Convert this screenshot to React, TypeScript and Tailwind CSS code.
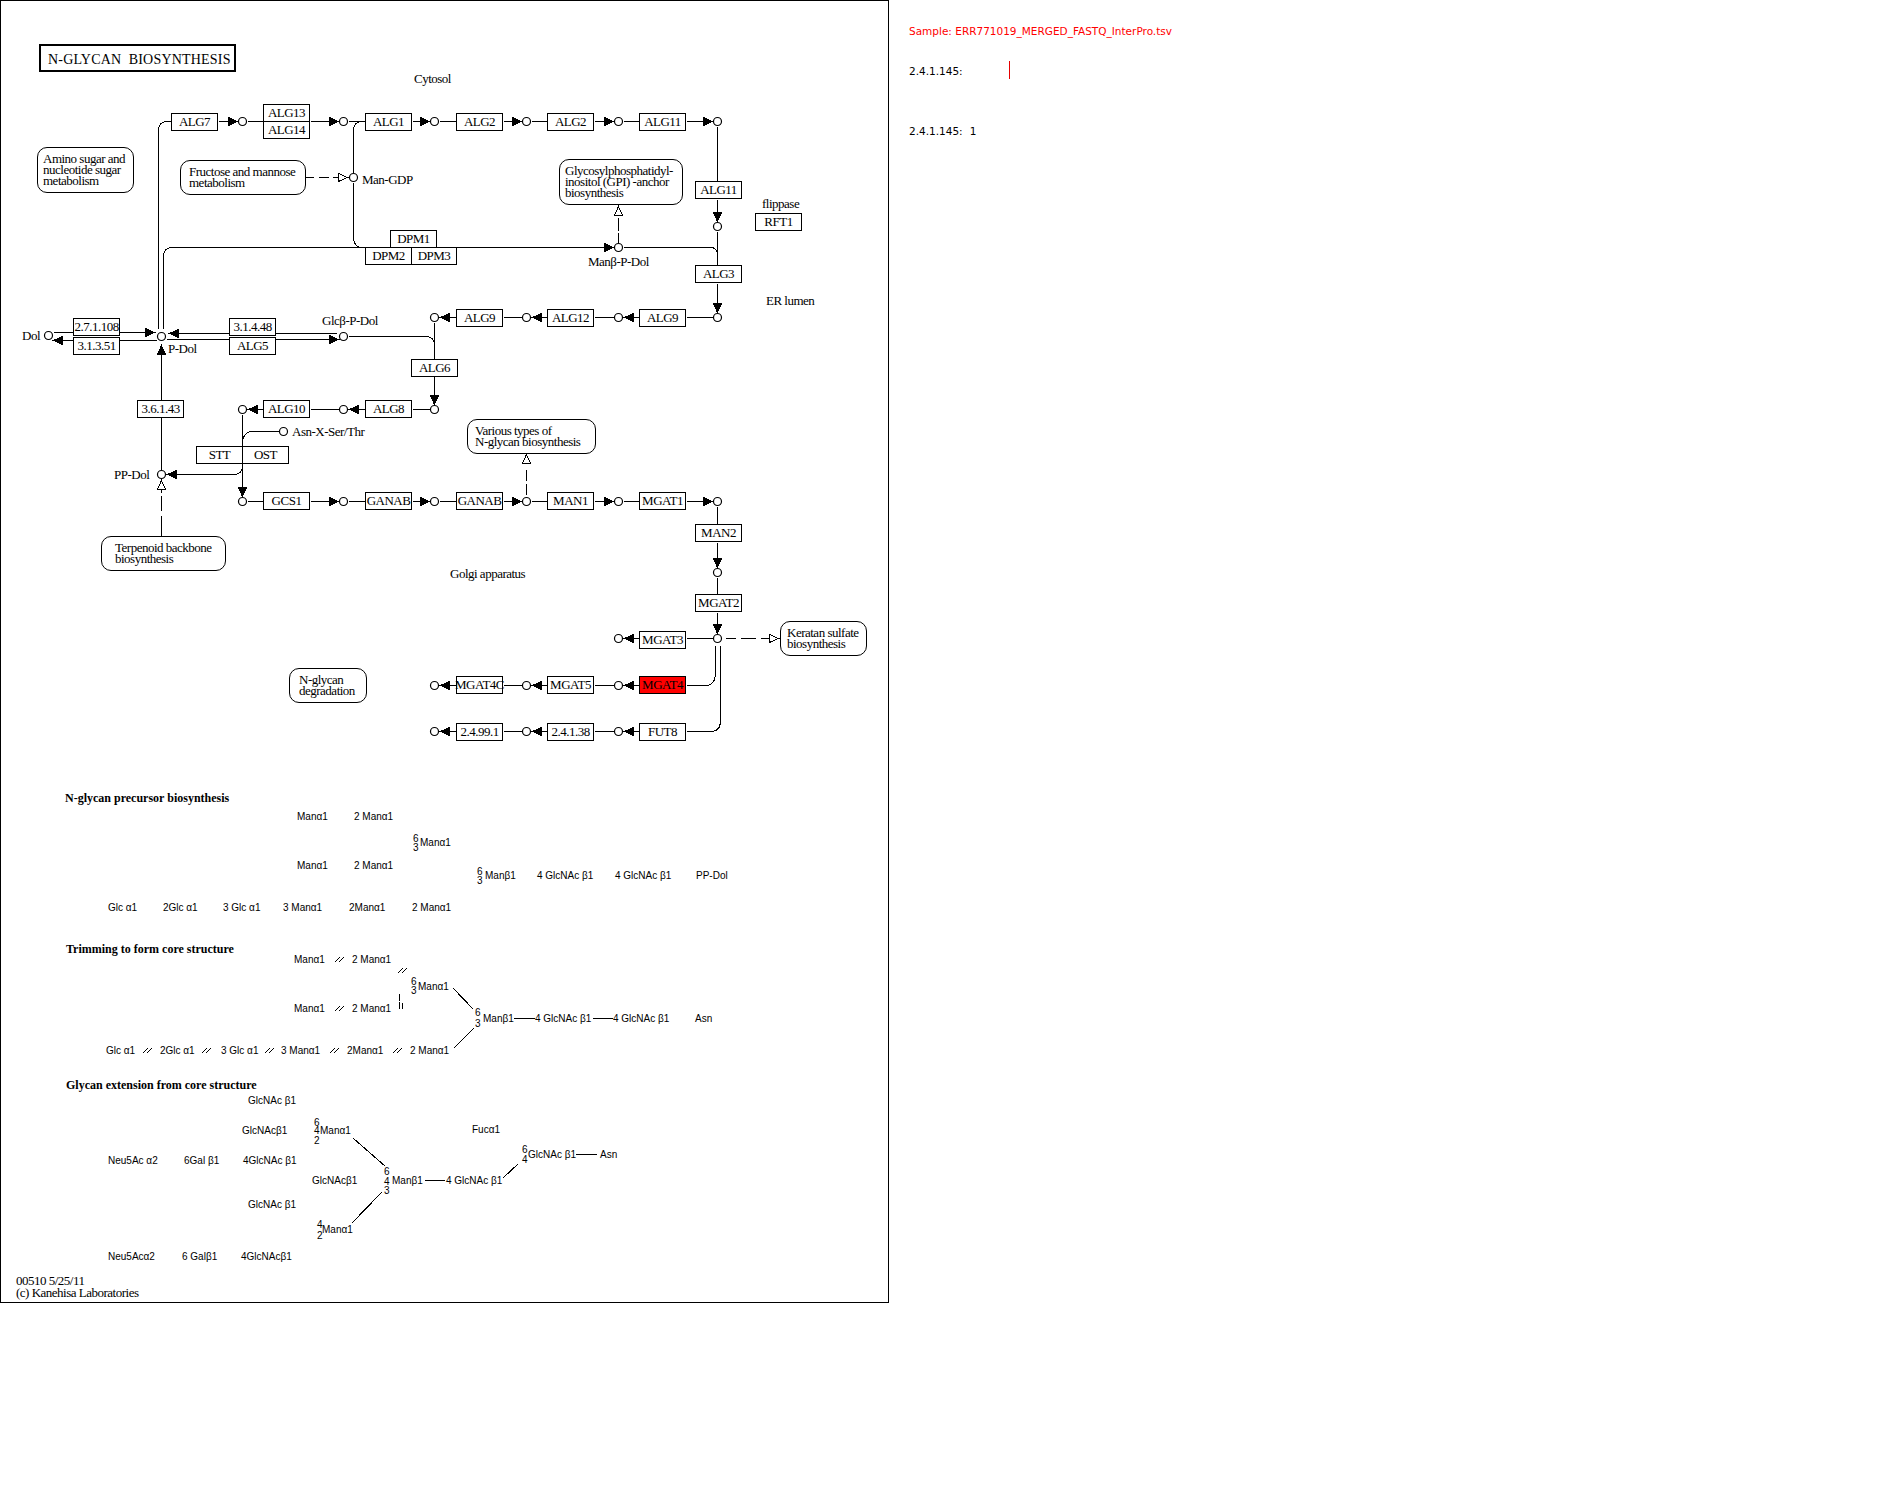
import React from 'react';

type Box = [label: string, x: number, y: number, w?: number, h?: number];
type Arrow = [x: number, y: number, dir: 'r' | 'l' | 'u' | 'd', hollow?: boolean];
type Label = [text: string, x: number, y: number];
type Pathway = [lines: string[], x: number, y: number, w: number, h: number, pad: number];

const boxes: Box[] = [
  ['ALG7', 171, 113], ['ALG13', 263, 104], ['ALG14', 263, 121], ['ALG1', 365, 113],
  ['ALG2', 456, 113], ['ALG2', 547, 113], ['ALG11', 639, 113],
  ['ALG11', 695, 181], ['RFT1', 755, 213], ['ALG3', 695, 265],
  ['DPM1', 390, 230], ['DPM2', 365, 247], ['DPM3', 411, 247, 46],
  ['ALG9', 456, 309], ['ALG12', 547, 309], ['ALG9', 639, 309],
  ['2.7.1.108', 73, 318], ['3.1.3.51', 73, 337], ['3.1.4.48', 229, 318], ['ALG5', 229, 337],
  ['ALG6', 411, 359], ['3.6.1.43', 137, 400], ['ALG10', 263, 400], ['ALG8', 365, 400],
  ['STT', 196, 446], ['OST', 242, 446],
  ['GCS1', 263, 492], ['GANAB', 365, 492], ['GANAB', 456, 492], ['MAN1', 547, 492], ['MGAT1', 639, 492],
  ['MAN2', 695, 524], ['MGAT2', 695, 594], ['MGAT3', 639, 631],
  ['MGAT4C', 456, 676], ['MGAT5', 547, 676],
  ['2.4.99.1', 456, 723], ['2.4.1.38', 547, 723], ['FUT8', 639, 723],
];

const pathways: Pathway[] = [
  [['Amino sugar and', 'nucleotide sugar', 'metabolism'], 37, 147, 97, 46, 6],
  [['Fructose and mannose', 'metabolism'], 180, 160, 126, 35, 9],
  [['Glycosylphosphatidyl-', 'inositol (GPI) -anchor', 'biosynthesis'], 559, 159, 124, 46, 6],
  [['Terpenoid backbone', 'biosynthesis'], 101, 536, 125, 35, 14],
  [['Various types of', 'N-glycan biosynthesis'], 467, 419, 129, 35, 8],
  [['Keratan sulfate', 'biosynthesis'], 780, 621, 87, 35, 7],
  [['N-glycan', 'degradation'], 289, 668, 78, 35, 10],
];

const compounds: [number, number][] = [
  [242, 121], [343, 121], [434, 121], [526, 121], [618, 121], [717, 121],
  [353, 177], [717, 226], [618, 247],
  [717, 317], [618, 317], [526, 317], [434, 317],
  [161, 336], [48, 335], [343, 336],
  [242, 409], [343, 409], [434, 409], [283, 431], [161, 474],
  [242, 501], [343, 501], [434, 501], [526, 501], [618, 501], [717, 501],
  [717, 572], [717, 638], [618, 638],
  [618, 685], [526, 685], [434, 685],
  [618, 731], [526, 731], [434, 731],
];

const arrows: Arrow[] = [
  [237, 121, 'r'], [338, 121, 'r'], [429, 121, 'r'], [521, 121, 'r'], [613, 121, 'r'], [712, 121, 'r'],
  [717, 221, 'd'], [717, 312, 'd'], [613, 247, 'r'],
  [624, 317, 'l'], [532, 317, 'l'], [440, 317, 'l'],
  [154, 332, 'r'], [53, 340, 'l'], [169, 333, 'l'], [338, 339, 'r'], [161, 345, 'u'],
  [434, 404, 'd'], [349, 409, 'l'], [248, 409, 'l'], [242, 496, 'd'], [167, 474, 'l'],
  [338, 501, 'r'], [429, 501, 'r'], [521, 501, 'r'], [613, 501, 'r'], [712, 501, 'r'],
  [717, 567, 'd'], [717, 633, 'd'], [624, 638, 'l'],
  [624, 685, 'l'], [532, 685, 'l'], [440, 685, 'l'],
  [624, 731, 'l'], [532, 731, 'l'], [440, 731, 'l'],
  [347, 177, 'r', true], [618, 206, 'u', true], [161, 480, 'u', true], [526, 454, 'u', true], [778, 638, 'r', true],
];

const edges = [
  'M218 121H238M247 121H263M310 121H339M348 121H365M412 121H430M439 121H456M503 121H522M531 121H547M594 121H614M623 121H639M686 121H713',
  'M717 126V181M717 199V222M717 231V265M717 283V313',
  'M623 247H710Q717 247 717 254',
  'M171 121H167Q158 121 158 130V328',
  'M163 328V256Q163 247 172 247H610',
  'M365 121H362Q353 121 353 130V172M353 182V235Q353 247 361 247',
  'M53 332H146M62 340H156M178 333H336M166 339H331',
  'M348 336H425Q434 336 434 345M434 322V396',
  'M712 317H686M639 317H632M613 317H594M547 317H540M521 317H503M456 317H449',
  'M429 409H412M365 409H357M338 409H310M263 409H256',
  'M242 414V490M278 431H252Q244 431 242 440M242 465Q242 474 233 474H176M161 353V469',
  'M247 501H263M310 501H329M348 501H365M412 501H430M439 501H456M503 501H522M531 501H547M594 501H614M623 501H639M686 501H713',
  'M717 506V524M717 542V558M717 577V594M717 612V624M712 638H686M639 638H632',
  'M715 645V672Q715 685 705 685H686M720 645V720Q720 731 710 731H686',
  'M639 685H632M613 685H594M547 685H540M521 685H503M456 685H449',
  'M639 731H632M613 731H594M547 731H540M521 731H503M456 731H449',
  // dashed links, drawn dash by dash
  'M305 177H313M318 177H328M332 177H339M618 242V232M618 230V217M161 535V515M161 510V495M161 492V489',
  'M526 494V483M526 480V469M725 638H735M740 638H755M760 638H770',
  // glycan bonds
  'M453 988L473 1009M453 1048L473 1028M513 1018H534M592 1018H612',
  'M353 1138L385 1166M351 1223L381 1192M503 1177L518 1163M424 1180H444M575 1154H596',
];

// the little "//" marks in the trimming section
const cuts: [number, number][] = [
  [334, 957], [334, 1006], [142, 1048], [201, 1048], [264, 1048], [329, 1048], [392, 1048], [397, 968],
];

const serifLabels: Label[] = [
  ['Cytosol', 414, 79], ['Man-GDP', 362, 180], ['Glcβ-P-Dol', 322, 321], ['Dol', 22, 336], ['P-Dol', 168, 349],
  ['flippase', 762, 204], ['ER lumen', 766, 301], ['Manβ-P-Dol', 588, 262], ['PP-Dol', 114, 475],
  ['Asn-X-Ser/Thr', 292, 432], ['Golgi apparatus', 450, 574],
  ['00510 5/25/11', 16, 1281], ['(c) Kanehisa Laboratories', 16, 1293],
];

const headings: Label[] = [
  ['N-glycan precursor biosynthesis', 65, 798],
  ['Trimming to form core structure', 66, 949],
  ['Glycan extension from core structure', 66, 1085],
];

const glycans: Label[] = [
  ['Manα1', 297, 816], ['2 Manα1', 354, 816], ['6', 413, 838], ['3', 413, 847], ['Manα1', 420, 842],
  ['Manα1', 297, 865], ['2 Manα1', 354, 865], ['6', 477, 871], ['3', 477, 880], ['Manβ1', 485, 875],
  ['4 GlcNAc β1', 537, 875], ['4 GlcNAc β1', 615, 875], ['PP-Dol', 696, 875],
  ['Glc α1', 108, 907], ['2Glc α1', 163, 907], ['3 Glc α1', 223, 907], ['3 Manα1', 283, 907], ['2Manα1', 349, 907], ['2 Manα1', 412, 907],

  ['Manα1', 294, 959], ['2 Manα1', 352, 959], ['6', 411, 981], ['3', 411, 990], ['Manα1', 418, 986],
  ['Manα1', 294, 1008], ['2 Manα1', 352, 1008], ['6', 475, 1012], ['3', 475, 1023], ['Manβ1', 483, 1018],
  ['4 GlcNAc β1', 535, 1018], ['4 GlcNAc β1', 613, 1018], ['Asn', 695, 1018],
  ['Glc α1', 106, 1050], ['2Glc α1', 160, 1050], ['3 Glc α1', 221, 1050], ['3 Manα1', 281, 1050], ['2Manα1', 347, 1050], ['2 Manα1', 410, 1050],

  ['GlcNAc β1', 248, 1100], ['GlcNAcβ1', 242, 1130], ['6', 314, 1122], ['4', 314, 1130], ['2', 314, 1140], ['Manα1', 320, 1130],
  ['Fucα1', 472, 1129], ['Neu5Ac α2', 108, 1160], ['6Gal β1', 184, 1160], ['4GlcNAc β1', 243, 1160],
  ['6', 522, 1149], ['4', 522, 1159], ['GlcNAc β1', 528, 1154], ['Asn', 600, 1154],
  ['GlcNAcβ1', 312, 1180], ['6', 384, 1171], ['4', 384, 1181], ['3', 384, 1190], ['Manβ1', 392, 1180], ['4 GlcNAc β1', 446, 1180],
  ['GlcNAc β1', 248, 1204], ['4', 317, 1224], ['2', 317, 1235], ['Manα1', 322, 1229],
  ['Neu5Acα2', 108, 1256], ['6 Galβ1', 182, 1256], ['4GlcNAcβ1', 241, 1256],
];

function arrowPoints([x, y, dir]: Arrow) {
  if (dir === 'r') return `${x},${y} ${x - 9},${y - 4} ${x - 9},${y + 4}`;
  if (dir === 'l') return `${x},${y} ${x + 9},${y - 4} ${x + 9},${y + 4}`;
  if (dir === 'u') return `${x},${y} ${x - 4},${y + 9} ${x + 4},${y + 9}`;
  return `${x},${y} ${x - 4},${y - 9} ${x + 4},${y - 9}`;
}

function PathwayLinks() {
  return (
    <svg width={889} height={1303} className="absolute left-[-1px] top-[-1px]" shapeRendering="crispEdges">
      <g transform="translate(0.5 0.5)" fill="none" stroke="#000">
        {edges.map((d, i) => (
          <path key={i} d={d} />
        ))}
        {cuts.map(([x, y], i) => (
          <path key={i} d={`M${x} ${y + 5}L${x + 5} ${y}M${x + 4} ${y + 5}L${x + 9} ${y}`} />
        ))}
        <path d="M399 993V1000M399 1001V1008M402 1002V1008" />
        {arrows.map((a, i) => (
          <polygon key={i} points={arrowPoints(a)} fill={a[3] ? '#fff' : '#000'} />
        ))}
        {compounds.map(([cx, cy], i) => (
          <circle key={i} cx={cx} cy={cy} r={4} fill="#fff" strokeWidth={1.2} shapeRendering="geometricPrecision" />
        ))}
      </g>
    </svg>
  );
}

function GeneBox({ label, x, y, w = 47, h = 18, red = false }: { label: string; x: number; y: number; w?: number; h?: number; red?: boolean }) {
  return (
    <div
      className={`absolute flex items-center justify-center whitespace-nowrap border border-black pb-[2px] text-[13px] leading-none tracking-[-0.5px] ${red ? 'bg-[#ff0000]' : 'bg-white'}`}
      style={{ left: x - 1, top: y - 1, width: w, height: h }}
    >
      {label}
    </div>
  );
}

function PathwayBox({ item }: { item: Pathway }) {
  const [lines, x, y, w, h, pad] = item;
  return (
    <div
      className="absolute flex flex-col justify-center whitespace-nowrap rounded-[10px] border border-black bg-white pb-[2px] text-[13px] leading-[11px] tracking-[-0.5px]"
      style={{ left: x - 1, top: y - 1, width: w, height: h, paddingLeft: pad - 1 }}
    >
      {lines.map((line) => (
        <span key={line}>{line}</span>
      ))}
    </div>
  );
}

function Text({ item, className }: { item: Label; className: string }) {
  const [text, x, y] = item;
  return (
    <span className={`absolute whitespace-nowrap leading-[12px] ${className}`} style={{ left: x - 1, top: y - 7 }}>
      {text}
    </span>
  );
}

export default function App() {
  return (
    <div className="flex min-h-[1503px] bg-white text-black">
      <div className="relative h-[1303px] w-[889px] shrink-0 border border-black font-['Liberation_Serif',serif]">
        <PathwayLinks />

        <div className="absolute left-[38px] top-[43px] flex h-[28px] w-[197px] items-center whitespace-pre border-2 border-black pl-[7px] pt-[3px] text-[14px] tracking-[0.2px]">
          N-GLYCAN  BIOSYNTHESIS
        </div>

        {boxes.map(([label, x, y, w, h], i) => (
          <GeneBox key={i} label={label} x={x} y={y} w={w} h={h} />
        ))}
        <GeneBox label="MGAT4" x={639} y={676} red />

        {pathways.map((p) => (
          <PathwayBox key={p[0][0]} item={p} />
        ))}

        {serifLabels.map((l, i) => (
          <Text key={i} item={l} className="text-[13px] tracking-[-0.5px]" />
        ))}
        {headings.map((l, i) => (
          <Text key={i} item={l} className="text-[12px] font-bold" />
        ))}
        {glycans.map((l, i) => (
          <Text key={i} item={l} className="mt-[1px] font-['Liberation_Sans',sans-serif] text-[10px]" />
        ))}
      </div>

      <div className="flex-1 pl-[20px] pt-[23px] font-['DejaVu_Sans',sans-serif] text-[10.5px] leading-[16px]">
        <p className="text-[#ff0000]">Sample: ERR771019_MERGED_FASTQ_InterPro.tsv</p>
        <div className="mt-[22px] flex h-[18px] items-center">
          <span className="w-[100px] pt-[2px]">2.4.1.145:</span>
          <span className="h-[18px] w-px bg-[#e60000]" />
        </div>
        <p className="mt-[44px] flex gap-[7px]">
          <span>2.4.1.145:</span>
          <span>1</span>
        </p>
      </div>
    </div>
  );
}
